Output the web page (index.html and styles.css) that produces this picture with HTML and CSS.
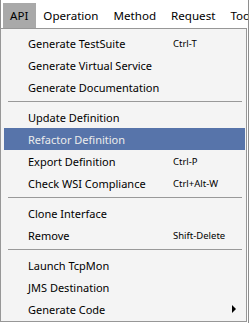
FILE: index.html
```html
<!DOCTYPE html>
<html lang="en">
<head>
  <meta charset="UTF-8" />
  <title>API menu</title>
  <link rel="stylesheet" href="styles.css">
</head>
<body>
  <div class="window">
    <div class="menubar">
      <span class="menubar-item active">API</span>
      <span class="menubar-item">Operation</span>
      <span class="menubar-item">Method</span>
      <span class="menubar-item">Request</span>
      <span class="menubar-item">Tools</span>
    </div>

    <div class="dropdown">
      <div class="item"><span class="label">Generate TestSuite</span><span class="shortcut">Ctrl-T</span></div>
      <div class="item"><span class="label">Generate Virtual Service</span></div>
      <div class="item"><span class="label">Generate Documentation</span></div>
      <div class="separator"></div>
      <div class="item"><span class="label">Update Definition</span></div>
      <div class="item selected"><span class="label">Refactor Definition</span></div>
      <div class="item"><span class="label">Export Definition</span><span class="shortcut">Ctrl-P</span></div>
      <div class="item"><span class="label">Check WSI Compliance</span><span class="shortcut">Ctrl+Alt-W</span></div>
      <div class="separator"></div>
      <div class="item"><span class="label">Clone Interface</span></div>
      <div class="item"><span class="label">Remove</span><span class="shortcut">Shift-Delete</span></div>
      <div class="separator"></div>
      <div class="item"><span class="label">Launch TcpMon</span></div>
      <div class="item"><span class="label">JMS Destination</span></div>
      <div class="item"><span class="label">Generate Code</span><span class="arrow"></span></div>
    </div>
  </div>
</body>
</html>
```

FILE: styles.css
```css
* {
  box-sizing: border-box;
}
body {
  margin: 0;
  background: #ffffff;
  font-family: 'Noto Sans', 'Open Sans', sans-serif;
  font-size: 11px;
  color: #000000;
}
.window {
  width: 249px;
  height: 323px;
  border-right: 1px solid #8e8e8e;
  overflow: hidden;
}
.menubar {
  display: flex;
  height: 28px;
  padding: 3px 0 0 2px;
  border-left: 1px solid #8e8e8e;
  background: #ffffff;
  white-space: nowrap;
  overflow: hidden;
  font-size: 11.6px;
}
.menubar-item {
  display: flex;
  align-items: center;
  height: 25px;
  padding: 0 8px 0 7px;
  flex-shrink: 0;
}
.menubar-item.active {
  background: #a9a9a9;
}
.dropdown {
  width: 247px;
  border: 1px solid #979797;
  background: #f4f4f4;
  padding: 3px 1px 1px 3px;
}
.item {
  display: flex;
  align-items: center;
  height: 22px;
  padding-left: 24px;
  position: relative;
}
.item.selected {
  background: #5774aa;
  color: #ececec;
}
.shortcut {
  position: absolute;
  left: 169px;
  font-size: 9.5px;
}
.arrow {
  position: absolute;
  left: 228px;
  top: 7px;
  width: 0;
  height: 0;
  border-top: 4px solid transparent;
  border-bottom: 4px solid transparent;
  border-left: 4px solid #000000;
}
.separator {
  height: 8px;
  padding-top: 3px;
}
.separator::after {
  content: "";
  display: block;
  height: 1px;
  margin: 0 3px 0 4px;
  background: #999999;
}
```
